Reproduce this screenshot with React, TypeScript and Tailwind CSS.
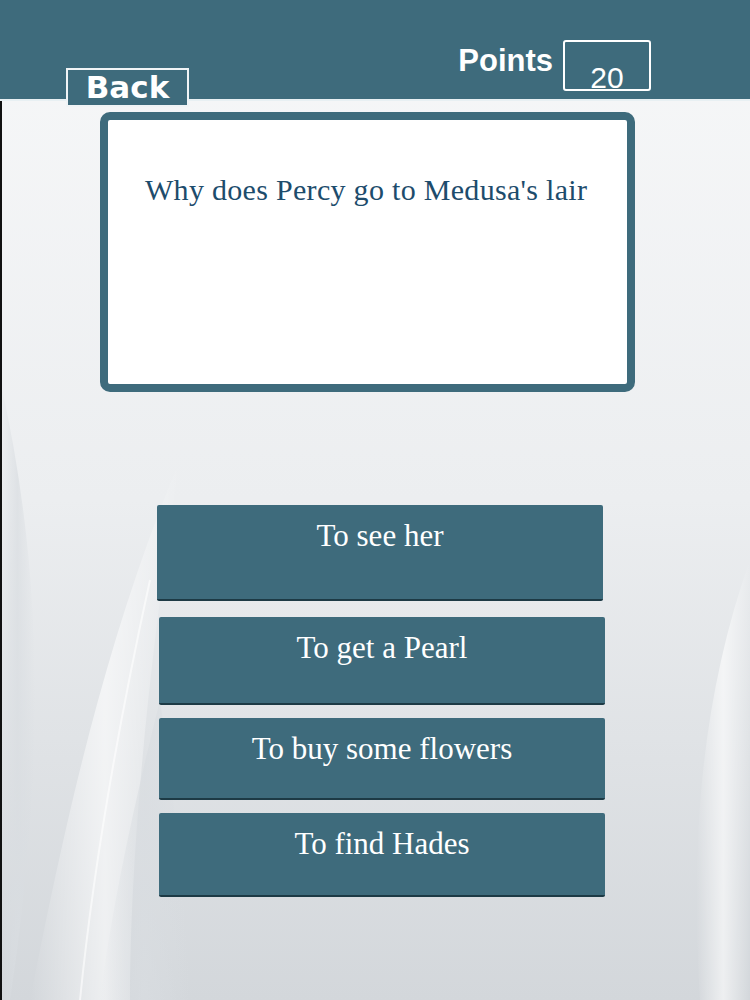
import React from "react";

const answers = [
  { text: "To see her", ml: "ml-[157px]", mt: "mt-[113px]", h: "h-[96px]" },
  { text: "To get a Pearl", ml: "ml-[159px]", mt: "mt-[16px]", h: "h-[88px]" },
  { text: "To buy some flowers", ml: "ml-[159px]", mt: "mt-[13px]", h: "h-[82px]" },
  { text: "To find Hades", ml: "ml-[159px]", mt: "mt-[13px]", h: "h-[84px]" },
];

export default function App() {
  return (
    <div className="relative w-[750px] h-[1000px] overflow-hidden bg-gradient-to-b from-[#f7f8f9] via-[#eceef0] to-[#d3d7db]">
      <svg className="absolute inset-0 w-[750px] h-[1000px] pointer-events-none" viewBox="0 0 750 1000">
        <defs>
          <linearGradient id="sw" x1="0" y1="0" x2="1" y2="0">
            <stop offset="0" stopColor="#ffffff" stopOpacity="0" />
            <stop offset="0.5" stopColor="#ffffff" stopOpacity="0.6" />
            <stop offset="1" stopColor="#ffffff" stopOpacity="0" />
          </linearGradient>
          <linearGradient id="sh" x1="0" y1="0" x2="1" y2="0">
            <stop offset="0" stopColor="#d9dde1" stopOpacity="0" />
            <stop offset="0.5" stopColor="#d9dde1" stopOpacity="0.7" />
            <stop offset="1" stopColor="#d9dde1" stopOpacity="0" />
          </linearGradient>
        </defs>
        <path d="M0 380 C 50 600, 40 800, 10 1000 L 0 1000 Z" fill="url(#sh)" />
        <path d="M180 460 C 100 650, 60 850, 30 1000 L 130 1000 C 130 850, 150 650, 180 460 Z" fill="url(#sw)" />
        <path d="M150 580 C 115 740, 92 880, 80 1000" stroke="#ffffff" strokeWidth="2" fill="none" opacity="0.6" />
        <path d="M160 700 C 130 820, 110 920, 100 1000 L 190 1000 C 185 900, 175 800, 160 700 Z" fill="url(#sh)" />
        <path d="M750 560 C 700 700, 690 850, 700 1000 L 750 1000 Z" fill="url(#sw)" />
      </svg>
      <div className="absolute left-0 top-0 w-[2px] h-[1000px] bg-[#111]" />

      <div className="relative flex flex-col">
        <div className="relative z-10 flex h-[101px] bg-[#3e6b7c] border-b-2 border-[#e8f0f3]">
          <div className="ml-[66px] mt-[68px] w-[123px] h-[39px] bg-[#3e6b7c] border-2 border-[#f0f4f6] flex items-center justify-center pb-[1px]">
            <span className="text-white font-bold text-[31px] leading-none [font-family:'DejaVu_Sans','Liberation_Sans',sans-serif]">
              Back
            </span>
          </div>
          <div className="ml-auto mr-[99px] mt-[40px] flex items-start">
            <span className="mt-[5px] text-white font-bold text-[31px] leading-none [font-family:'Liberation_Sans',sans-serif]">
              Points
            </span>
            <div className="ml-[10px] w-[88px] h-[51px] border-2 border-white rounded-[3px] overflow-hidden flex justify-center">
              <span className="mt-[21px] text-white text-[30px] leading-none [font-family:'Liberation_Sans',sans-serif]">20</span>
            </div>
          </div>
        </div>

        <div className="ml-[100px] mt-[11px] w-[535px] h-[280px] border-[8px] border-[#3e6b7c] rounded-[10px] bg-white pl-[37px] pt-[55px]">
          <p className="whitespace-nowrap text-[#1d4c6c] text-[30px] leading-none tracking-[0.3px] [font-family:'Liberation_Serif',serif]">
            Why does Percy go to Medusa's lair
          </p>
        </div>

        {answers.map((a) => (
          <div
            key={a.text}
            className={`${a.ml} ${a.mt} ${a.h} w-[446px] bg-[#3e6b7c] border-b-2 border-[#1d3a45] rounded-[2px] flex justify-center pt-[15px]`}
          >
            <span className="whitespace-nowrap text-white text-[31px] leading-none [font-family:'Liberation_Serif',serif]">
              {a.text}
            </span>
          </div>
        ))}
      </div>
    </div>
  );
}
